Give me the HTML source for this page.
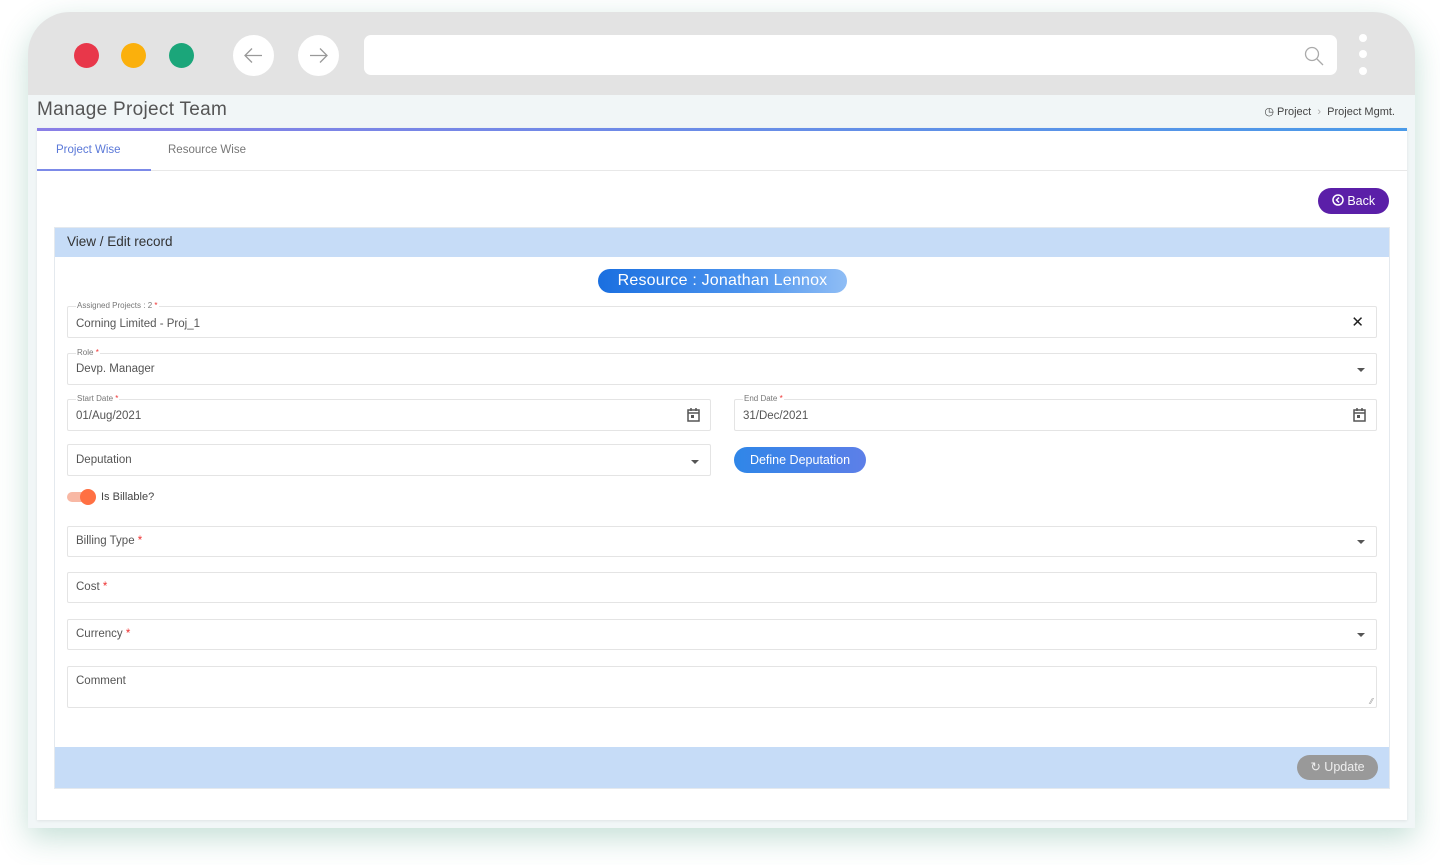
<!DOCTYPE html>
<html><head><meta charset="utf-8"><style>
*{box-sizing:border-box;margin:0;padding:0}
body{width:1440px;height:865px;background:#fff;font-family:"Liberation Sans",sans-serif;position:relative;overflow:hidden;color:#555}
.win{position:absolute;left:28px;top:12px;width:1387px;height:816px;border-radius:42px 42px 0 0;background:#f1f6f7;overflow:hidden;box-shadow:0 10px 30px rgba(60,150,120,.3)}
.chrome{position:absolute;left:0;top:0;width:100%;height:83px;background:#e3e3e3}
.dot{position:absolute;top:31px;width:25px;height:25px;border-radius:50%}
.nav{position:absolute;top:23px;width:41px;height:41px;border-radius:50%;background:#fff}
.url{position:absolute;left:336px;top:23px;width:973px;height:40px;background:#fff;border-radius:7px}
.title{position:absolute;left:9px;top:87px;font-size:19px;color:#555;letter-spacing:.3px}
.bc{position:absolute;right:20px;top:93px;font-size:11px;color:#444}
.card{position:absolute;left:9px;top:116px;width:1370px;height:692px;background:#fff;border-top:3px solid #7c8ae8;border-image:linear-gradient(90deg,#8a7fe6,#4a9ae8) 1;box-shadow:0 1px 3px rgba(0,0,0,.08)}
.tabs{height:40px;border-bottom:1px solid #e8e8e8;position:relative;font-size:11.5px}
.tab{position:absolute;top:13px}
.back{position:absolute;right:18px;top:57px;width:71px;height:26px;border-radius:13px;background:#5b1fa8;color:#fff;font-size:12.5px;line-height:26px;text-align:center}
.panel{position:absolute;left:17px;top:96px;width:1336px;height:562px;border:1px solid #e4e9ee}
.ph{height:29px;background:#c6dcf7;font-size:13.5px;color:#333;padding:6px 12px}
.pf{position:absolute;left:0;bottom:0;width:100%;height:41px;background:#c6dcf7}
.upd{position:absolute;right:11px;top:8px;width:81px;height:25px;border-radius:13px;background:#999;color:#eee;font-size:12.5px;line-height:25px;text-align:center}
.res{position:absolute;left:543px;top:12px;width:249px;height:24px;border-radius:12px;background:linear-gradient(90deg,#1a6fe0,#4e95ee 60%,#8fbdf5);color:#fff;font-size:16px;line-height:24px;text-align:center;letter-spacing:.2px}
.f{position:absolute;border:1px solid #e4e4e4;border-radius:2px;background:#fff;font-size:11.5px;color:#555}
.f .l{position:absolute;left:8px;top:-6px;font-size:8px;background:#fff;padding:0 1px;color:#777}
.f .v{position:absolute;left:8px}
.r{color:#e33}
.car{position:absolute;right:11px;width:0;height:0;border-left:4px solid transparent;border-right:4px solid transparent;border-top:4px solid #555}
.dd{position:absolute;left:679px;top:190px;width:132px;height:26px;border-radius:13px;background:linear-gradient(90deg,#2f86e8,#5d7fe8);color:#fff;font-size:12.5px;line-height:26px;text-align:center}
</style></head><body>
<div class="win">
 <div class="chrome">
  <div class="dot" style="left:46px;background:#e8374a"></div>
  <div class="dot" style="left:93px;background:#fbb00c"></div>
  <div class="dot" style="left:141px;background:#1ba67a"></div>
  <div class="nav" style="left:205px"><svg width="41" height="41"><path d="M29 20.5H12M19 13.5l-7 7 7 7" stroke="#999" stroke-width="1.3" fill="none"/></svg></div>
  <div class="nav" style="left:270px"><svg width="41" height="41"><path d="M12 20.5h17M22 13.5l7 7-7 7" stroke="#999" stroke-width="1.3" fill="none"/></svg></div>
  <div class="url"><svg style="position:absolute;right:12px;top:10px" width="22" height="22"><circle cx="9" cy="9" r="6.5" stroke="#aaa" stroke-width="1.3" fill="none"/><path d="M14 14l6 6" stroke="#aaa" stroke-width="1.3"/></svg></div>
  <div style="position:absolute;left:1331px;top:22px;width:8px;height:8px;border-radius:50%;background:#fff"></div>
  <div style="position:absolute;left:1331px;top:38px;width:8px;height:8px;border-radius:50%;background:#fff"></div>
  <div style="position:absolute;left:1331px;top:55px;width:8px;height:8px;border-radius:50%;background:#fff"></div>
 </div>
 <div class="title">Manage Project Team</div>
 <div class="bc">&#9719; Project &nbsp;<span style="color:#aaa">›</span>&nbsp; Project Mgmt.</div>
 <div class="card">
  <div class="tabs">
   <div class="tab" style="left:19px;color:#5a78d8">Project Wise</div>
   <div style="position:absolute;left:0;bottom:-1px;width:114px;height:2px;background:#7c8ae8"></div>
   <div class="tab" style="left:131px;color:#777">Resource Wise</div>
  </div>
  <div class="back"><svg width="12" height="12" style="vertical-align:-1px"><circle cx="6" cy="6" r="5" stroke="#fff" stroke-width="1.5" fill="none"/><path d="M7 3.5L4.5 6 7 8.5" stroke="#fff" stroke-width="1.5" fill="none"/></svg> Back</div>
  <div class="panel">
   <div class="ph">View / Edit record</div>
   <div style="position:relative">
    <div class="res">Resource : Jonathan Lennox</div>
    <div class="f" style="left:12px;top:49px;width:1310px;height:32px"><span class="l">Assigned Projects : 2 <span class="r">*</span></span><span class="v" style="top:11px">Corning Limited - Proj_1</span><span style="position:absolute;right:12px;top:6px;font-size:15px;color:#222">✕</span></div>
    <div class="f" style="left:12px;top:96px;width:1310px;height:32px"><span class="l">Role <span class="r">*</span></span><span class="v" style="top:9px">Devp. Manager</span><span class="car" style="top:14px"></span></div>
    <div class="f" style="left:12px;top:142px;width:644px;height:32px"><span class="l">Start Date <span class="r">*</span></span><span class="v" style="top:10px">01/Aug/2021</span><svg style="position:absolute;right:10px;top:8px" width="13" height="14"><rect x="1" y="2" width="11" height="11" stroke="#555" stroke-width="1.5" fill="none"/><path d="M1 5h11M4 0v3M9 0v3" stroke="#555" stroke-width="1.5"/><rect x="4" y="7" width="3" height="3" fill="#555"/></svg></div>
    <div class="f" style="left:679px;top:142px;width:643px;height:32px"><span class="l">End Date <span class="r">*</span></span><span class="v" style="top:10px">31/Dec/2021</span><svg style="position:absolute;right:10px;top:8px" width="13" height="14"><rect x="1" y="2" width="11" height="11" stroke="#555" stroke-width="1.5" fill="none"/><path d="M1 5h11M4 0v3M9 0v3" stroke="#555" stroke-width="1.5"/><rect x="4" y="7" width="3" height="3" fill="#555"/></svg></div>
    <div class="f" style="left:12px;top:187px;width:644px;height:32px"><span class="v" style="top:9px">Deputation</span><span class="car" style="top:15px"></span></div>
    <div class="dd">Define Deputation</div>
    <div style="position:absolute;left:12px;top:235px;width:26px;height:10px;border-radius:5px;background:#f8b8a4"></div>
    <div style="position:absolute;left:25px;top:232px;width:16px;height:16px;border-radius:50%;background:#ff7043"></div>
    <div style="position:absolute;left:46px;top:234px;font-size:11px;color:#444">Is Billable?</div>
    <div class="f" style="left:12px;top:269px;width:1310px;height:31px"><span class="v" style="top:8px">Billing Type <span class="r">*</span></span><span class="car" style="top:13px"></span></div>
    <div class="f" style="left:12px;top:315px;width:1310px;height:31px"><span class="v" style="top:8px">Cost <span class="r">*</span></span></div>
    <div class="f" style="left:12px;top:362px;width:1310px;height:31px"><span class="v" style="top:8px">Currency <span class="r">*</span></span><span class="car" style="top:13px"></span></div>
    <div class="f" style="left:12px;top:409px;width:1310px;height:42px"><span class="v" style="top:8px">Comment</span><span style="position:absolute;right:3px;bottom:1px;font-size:8px;color:#999">⁄⁄</span></div>
   </div>
   <div class="pf"><div class="upd">↻ Update</div></div>
  </div>
 </div>
</div>
</body></html>
